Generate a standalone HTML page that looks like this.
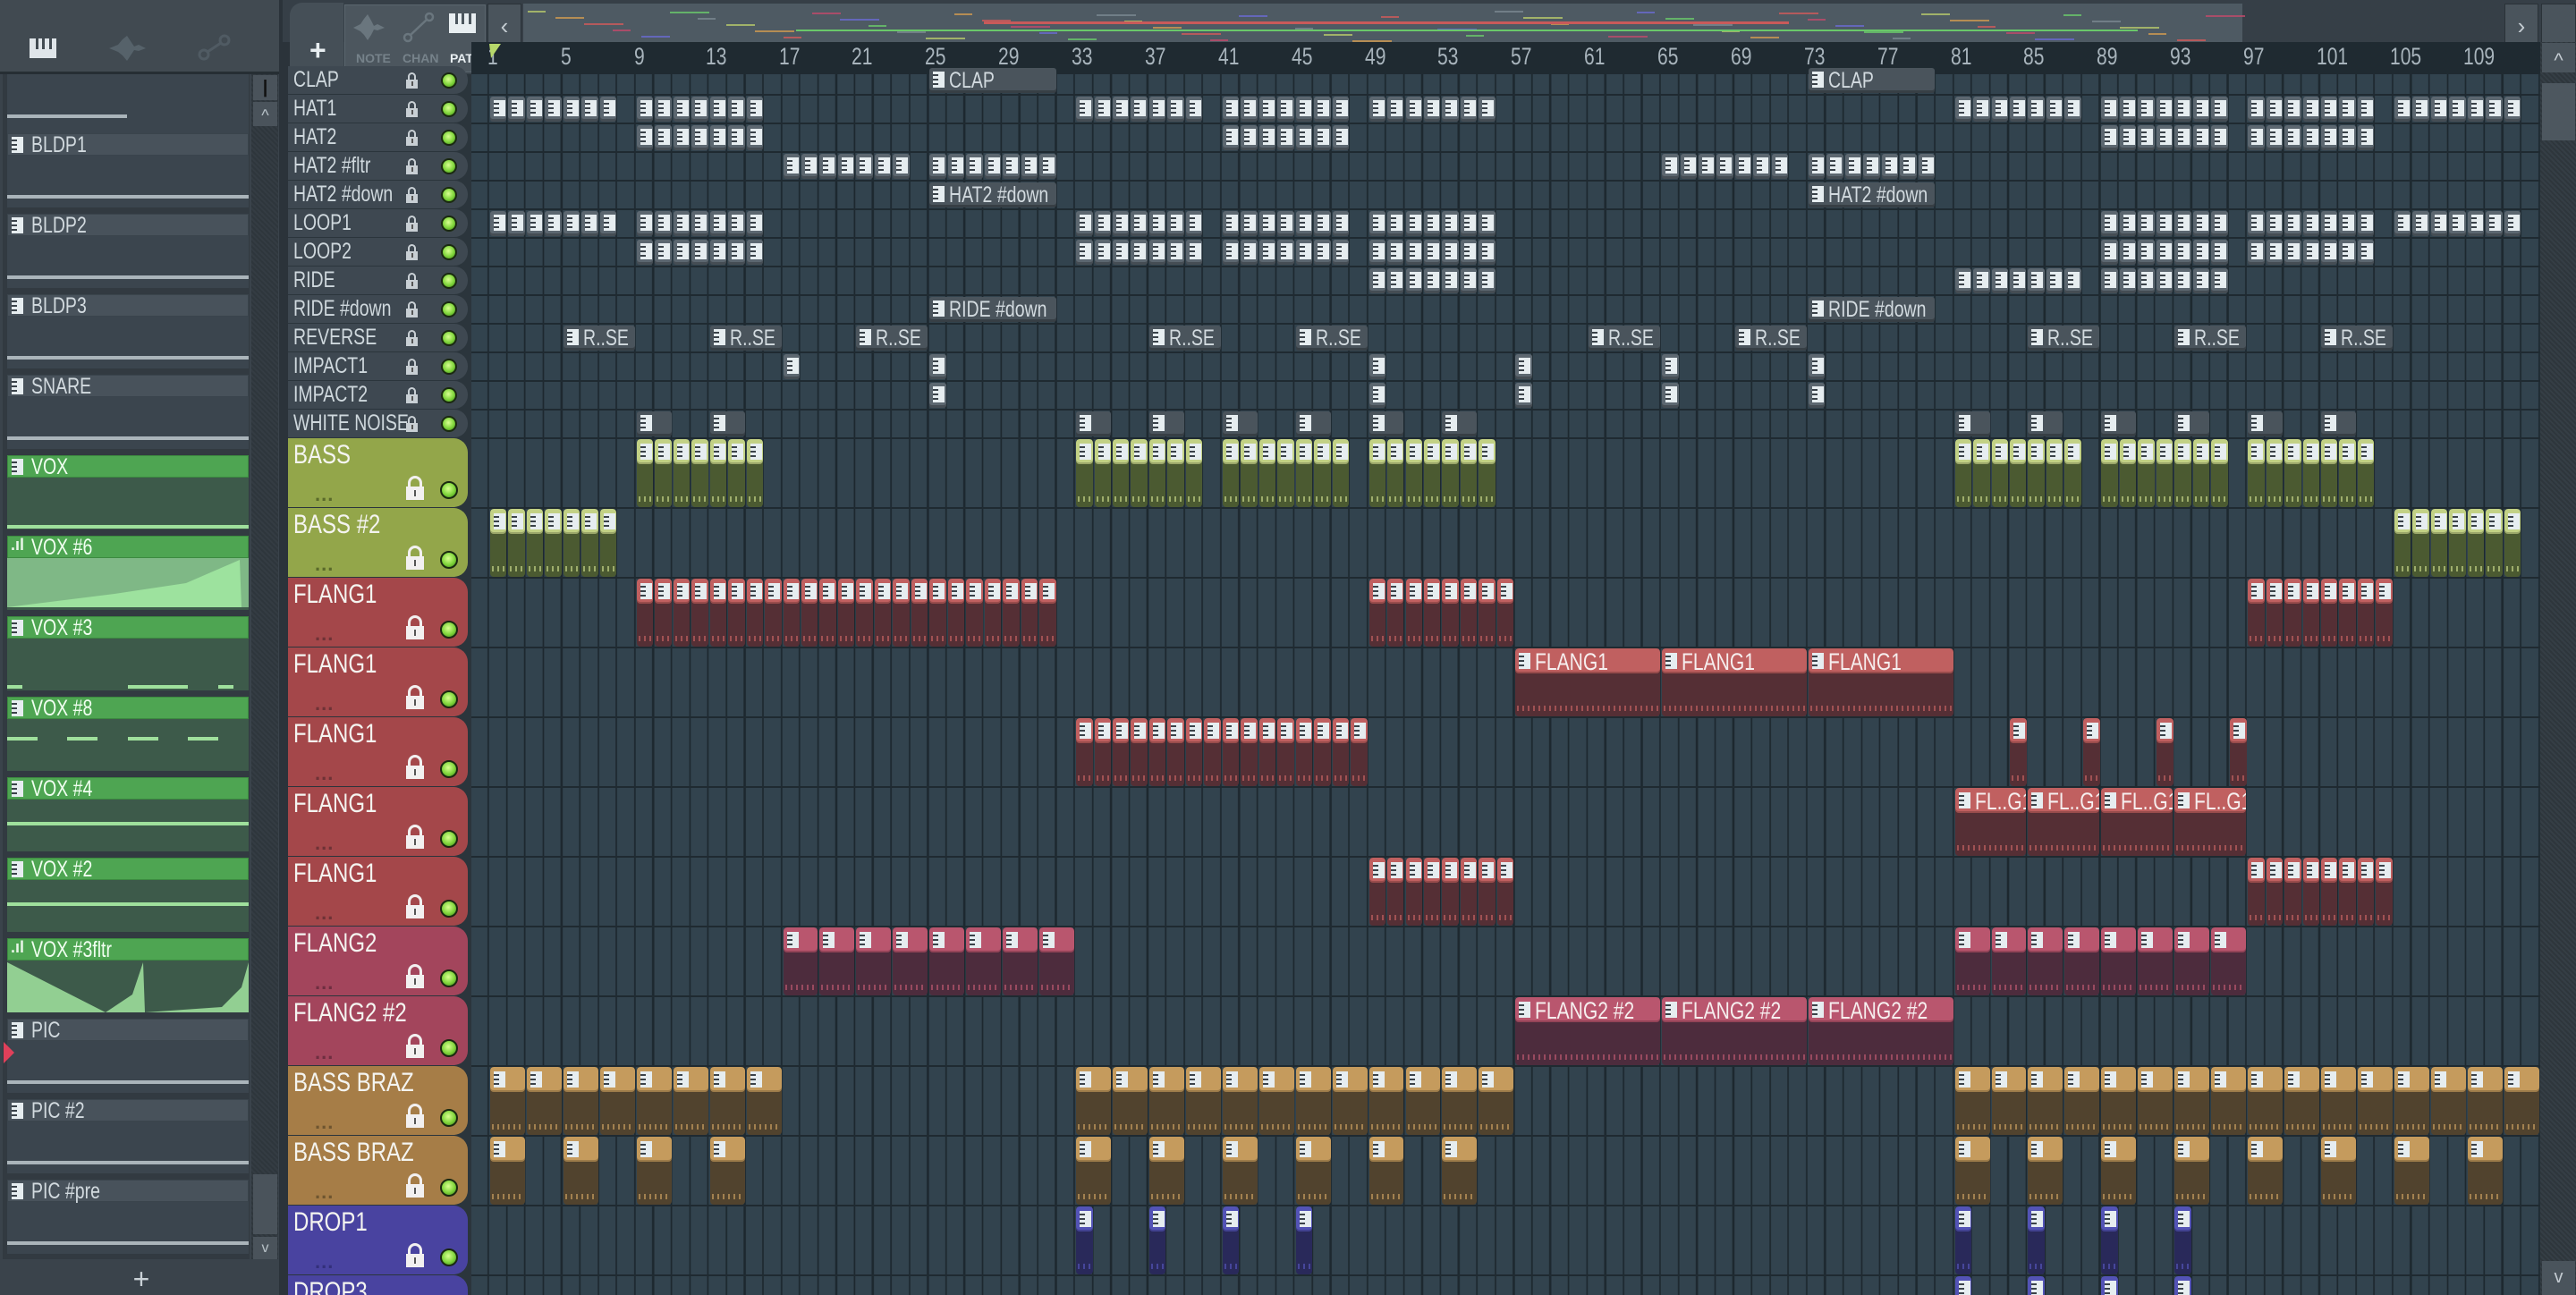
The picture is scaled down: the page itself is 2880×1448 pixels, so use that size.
<!DOCTYPE html>
<html><head><meta charset="utf-8">
<style>
*{box-sizing:border-box;margin:0;padding:0}
html,body{width:2880px;height:1448px;overflow:hidden}
body{background:#3a444c;font-family:"Liberation Sans Narrow","Liberation Sans",sans-serif;}
#wrap{position:relative;width:2880px;height:1448px;overflow:hidden}
.a{position:absolute}
.ic{position:absolute;width:13px;height:18px;background:linear-gradient(90deg,rgba(0,0,0,0) 0 45%,#e6edf0 45%),repeating-linear-gradient(180deg,#e6edf0 0 3px,#3a4249 3px 5px);}
.txt{position:absolute;white-space:nowrap;transform-origin:0 0}
</style></head><body><div id="wrap">
<div class="a" style="left:0;top:0;width:316px;height:83px;background:#414a51;border-bottom:3px solid #262e34"></div>
<svg class="a" style="left:0;top:0" width="316" height="83">
<rect x="33" y="43" width="30" height="22" fill="#dfe5e9"/>
<rect x="40" y="43" width="3" height="12" fill="#414a51"/><rect x="47" y="43" width="3" height="12" fill="#414a51"/><rect x="55" y="43" width="3" height="12" fill="#414a51"/>
<path d="M122 54 L132 50 L137 44 L142 40 L146 46 L150 52 L155 50 L163 54 L155 57 L150 56 L146 62 L142 68 L137 62 L132 58 Z" fill="#56626a"/>
<circle cx="228" cy="61" r="5" fill="none" stroke="#505b63" stroke-width="3"/><circle cx="251" cy="45" r="5" fill="none" stroke="#505b63" stroke-width="3"/><line x1="232" y1="58" x2="247" y2="48" stroke="#505b63" stroke-width="3"/>
</svg>
<div class="a" style="left:0;top:83px;width:316px;height:1365px;background:#3a434b"></div>
<div class="a" style="left:3px;top:83px;width:276px;height:1325px;background:#323a41"></div>
<div id="lp"></div>
<div class="a" style="left:281px;top:83px;width:30px;height:1325px;background:repeating-linear-gradient(45deg,#2e363c 0 2px,#343c43 2px 4px)"></div>
<div class="a" style="left:283px;top:84px;width:27px;height:28px;background:#4a535b;color:#111;font-size:20px;text-align:center;line-height:28px;font-weight:bold">|</div>
<div class="a" style="left:283px;top:114px;width:27px;height:27px;background:#4a535b;color:#b8c2c8;font-size:18px;text-align:center;line-height:30px">^</div>
<div class="a" style="left:283px;top:1313px;width:27px;height:67px;background:#4a535b"></div>
<div class="a" style="left:283px;top:1383px;width:27px;height:25px;background:#4a535b;color:#b8c2c8;font-size:16px;text-align:center;line-height:25px">v</div>
<div class="a" style="left:0;top:1410px;width:316px;height:38px;background:#3a434b;color:#c9d1d6;font-size:32px;text-align:center;line-height:40px">+</div>
<div class="a" style="left:312px;top:0;width:12px;height:1448px;background:#2b333a"></div>
<div class="a" style="left:316px;top:0;width:2564px;height:47px;background:#363f47"></div>
<div class="a" style="left:324px;top:3px;width:60px;height:80px;background:#454f57;border-radius:14px 0 0 0"></div>
<div class="txt" style="left:346px;top:38px;color:#e8eef1;font-size:32px;font-weight:bold">+</div>
<div class="a" style="left:385px;top:5px;width:158px;height:76px;background:#4c565e;border:1px solid #5b666e"></div>
<svg class="a" style="left:385px;top:5px" width="158" height="50">
<path d="M10 26 L18 22 L22 16 L26 11 L30 18 L33 24 L37 22 L45 26 L37 29 L33 28 L30 34 L26 40 L22 34 L18 30 Z" fill="#6a767e"/>
<circle cx="71" cy="37" r="4" fill="none" stroke="#6a767e" stroke-width="2.5"/><circle cx="95" cy="14" r="4" fill="none" stroke="#6a767e" stroke-width="2.5"/><line x1="74" y1="34" x2="92" y2="17" stroke="#6a767e" stroke-width="2.5"/>
<rect x="117" y="10" width="30" height="22" fill="#e8eef1"/><rect x="124" y="10" width="3" height="12" fill="#4c565e"/><rect x="131" y="10" width="3" height="12" fill="#4c565e"/><rect x="139" y="10" width="3" height="12" fill="#4c565e"/>
</svg>
<div class="txt" style="left:398px;top:57px;color:#76828a;font-size:14px;font-weight:bold">NOTE</div>
<div class="txt" style="left:450px;top:57px;color:#76828a;font-size:14px;font-weight:bold">CHAN</div>
<div class="txt" style="left:503px;top:57px;color:#e8eef1;font-size:14px;font-weight:bold">PAT</div>
<div class="a" style="left:545px;top:4px;width:38px;height:51px;background:#4a545c;border:1px solid #2a3238;color:#c4ccd2;font-size:26px;text-align:center;line-height:48px">‹</div>
<div class="a" style="left:585px;top:4px;width:1922px;height:51px;background:#4e5a63"></div>
<div id="ov"></div>
<div class="a" style="left:2800px;top:4px;width:38px;height:51px;background:#4a545c;border:1px solid #2a3238;color:#c4ccd2;font-size:26px;text-align:center;line-height:48px">›</div>
<div class="a" style="left:2841px;top:4px;width:39px;height:51px;background:#4a545c;border:1px solid #2a3238"></div>
<div class="a" style="left:527px;top:47px;width:2313px;height:36px;background:#1f2a31"></div>
<div id="rl"></div>
<svg class="a" style="left:545px;top:48px" width="16" height="18"><path d="M2 1 L15 1 L4 17 Z" fill="#b6d86a"/></svg>
<div class="a" style="left:322px;top:83px;width:205px;height:1365px;background:#2b353c"></div>
<div id="grid" class="a" style="left:527px;top:83px;width:2313px;height:1365px;background-color:#32434e;background-image:repeating-linear-gradient(90deg,#1d282f 0 2px,transparent 2px 20.47px);background-position:18px 0"></div>
<div id="rows"></div>
<div id="hd"></div>
<div id="cl"></div>
<div class="a" style="left:2840px;top:47px;width:40px;height:1401px;background:repeating-linear-gradient(45deg,#2e363c 0 2px,#353e45 2px 4px)"></div>
<div class="a" style="left:2842px;top:48px;width:37px;height:33px;background:#4a545c;color:#c4ccd2;font-size:22px;text-align:center;line-height:40px">^</div>
<div class="a" style="left:2842px;top:93px;width:37px;height:64px;background:#4d575f"></div>
<div class="a" style="left:2842px;top:1410px;width:37px;height:38px;background:#4a545c;color:#c4ccd2;font-size:20px;text-align:center;line-height:36px">v</div>
<div class="a" style="left:0;top:83px;width:2880px;height:1px"></div>
</div>
<script>
const BW=20.47,X=b=>547+(b-1)*BW;
function el(p,css,html){const d=document.createElement('div');d.className='a';d.style.cssText=css;if(html!==undefined)d.innerHTML=html;document.getElementById(p).appendChild(d);return d;}
for(let n=1;n<=109;n+=4){el('rl',`left:${X(n)-(n<10?2:4)}px;top:48px;color:#a8b4bc;font-size:27px;transform:scaleX(.78);transform-origin:0 0`,n);}
const ovc=['#b6c86a','#d09a50','#d05a5a','#c04a6a','#6a6ad0','#6ac86a','#7a8790'];
for(let i=0;i<60;i++){const x=590+Math.floor(i*31.8);const c=ovc[i%7];el('ov',`left:${x}px;top:${12+(i*7)%34}px;width:${20+(i%3)*12}px;height:2px;background:${c};opacity:.8`);}
el('ov','left:890px;top:33px;width:1500px;height:2px;background:#6ac86a');
el('ov','left:1100px;top:24px;width:900px;height:3px;background:#c85a5a');
const SR=74,SH=32,BR=490,BH=78;
for(let i=0;i<=13;i++)el('rows',`left:527px;top:${SR+i*SH-1}px;width:2313px;height:2px;background:#1f2a31`);
for(let j=0;j<=13;j++)el('rows',`left:527px;top:${BR+j*BH-1}px;width:2313px;height:2px;background:#1f2a31`);
const small=['CLAP','HAT1','HAT2','HAT2 #fltr','HAT2 #down','LOOP1','LOOP2','RIDE','RIDE #down','REVERSE','IMPACT1','IMPACT2','WHITE NOISE'];
const lock=(x,y,s,c)=>`<div class="a" style="top:${y}px;height:${s*0.7}px;border:${Math.max(2,s/6)}px solid ${c};border-bottom:none;border-radius:${s}px ${s}px 0 0;left:${x+s*0.12}px;width:${s*0.76}px"></div><div class="a" style="left:${x}px;top:${y+s*0.6}px;width:${s}px;height:${s*0.75}px;background:${c}"></div><div class="a" style="left:${x+s/2-1}px;top:${y+s*0.8}px;width:2px;height:${s*0.35}px;background:#555"></div>`;
const led=(cx,cy,r)=>`<div class="a" style="left:${cx-r}px;top:${cy-r}px;width:${2*r}px;height:${2*r}px;border-radius:50%;background:radial-gradient(circle at 45% 40%,#d8ff90,#7ed43a 55%,#3a7a18);border:2px solid #1a2a10"></div>`;
small.forEach((n,i)=>{const t=SR+i*SH;el('hd',`left:322px;top:${t}px;width:201px;height:31px;background:#3e4851;border-radius:0 15px 15px 0`,`<div class="txt" style="left:6px;top:1px;color:#cfd8dd;font-size:25px;transform:scaleX(.78)">${n}</div>${lock(132,7,13,'#c8cfd4')}${led(180,16,9)}`);});
const TH={g:['#93a64a','#c2d185','#4b5a31','#5a6a2a'],r:['#a4474a','#c06060','#552f35','#6e3236'],p:['#a3455c','#b9566e','#4d2c3d','#6e2e40'],b:['#a67d47','#c59b5d','#51432e','#6e5530'],u:['#4943a0','#5353b6','#29295a','#33307a']};
const big=[['BASS','g'],['BASS #2','g'],['FLANG1','r'],['FLANG1','r'],['FLANG1','r'],['FLANG1','r'],['FLANG1','r'],['FLANG2','p'],['FLANG2 #2','p'],['BASS BRAZ','b'],['BASS BRAZ','b'],['DROP1','u'],['DROP3','u']];
big.forEach((b,j)=>{const t=BR+j*BH,c=TH[b[1]];el('hd',`left:322px;top:${t}px;width:201px;height:77px;background:${c[0]};border-radius:0 16px 16px 0`,`<div class="txt" style="left:6px;top:2px;color:#f4f4f0;font-size:30px;transform:scaleX(.8)">${b[0]}</div><div class="txt" style="left:30px;top:50px;color:${c[3]};font-size:22px;font-weight:bold;letter-spacing:1px">...</div>${lock(132,42,20,'#f2f0f0')}${led(180,58,10)}`);});
const ic=(x,y,s)=>`<div class="ic" style="left:${x}px;top:${y}px;${s||''}"></div>`;
function sclip(row,b,len,label,light){const t=SR+row*SH;const x=X(b)+1,w=len*BW-2;
 el('cl',`left:${x}px;top:${t+2}px;width:${w}px;height:28px;background:${light?'#5c6770':'#4a545c'};border-radius:3px;box-shadow:inset 0 -3px 0 rgba(0,0,0,.25)`,ic(4,4)+(label?`<div class="txt" style="left:22px;top:0px;color:#d2dadf;font-size:25px;transform:scaleX(.78)">${label}</div>`:''));}
function sreps(row,starts,n,len){starts.forEach(s=>{for(let k=0;k<n;k++)sclip(row,s+k*len,len,null,true);});}
sreps(1,[1,9,33,41,49,81,89,97,105],7,1);
sreps(2,[9,41,89,97],7,1);
sreps(3,[17,25,65,73],7,1);
[25,73].forEach(s=>{sclip(0,s,7,'CLAP');sclip(4,s,7,'HAT2 #down');sclip(8,s,7,'RIDE #down');});
sreps(5,[1,9,33,41,49,89,97,105],7,1);
sreps(6,[9,33,41,49,89,97],7,1);
sreps(7,[49,81,89],7,1);
[5,13,21,37,45,61,69,85,93,101].forEach(s=>sclip(9,s,4,'R..SE'));
[17,25,49,57,65,73].forEach(s=>sclip(10,s,1,null,true));
[25,49,57,65,73].forEach(s=>sclip(11,s,1,null,true));
[9,13,33,37,41,45,49,53,81,85,89,93,97,101].forEach(s=>sclip(12,s,2,null));
function bclip(row,b,len,th,label,wpx){const t=BR+row*BH,c=TH[th];const x=X(b)+1,w=wpx||len*BW-2;
 el('cl',`left:${x}px;top:${t+1}px;width:${w}px;height:76px;background:${c[2]};border-radius:4px;overflow:hidden`,`<div class="a" style="left:0;top:0;width:${w}px;height:28px;background:${c[1]};border-radius:4px;box-shadow:inset 0 -2px 0 rgba(0,0,0,.2)"></div>`+ic(w<16?2:4,5)+(label?`<div class="txt" style="left:22px;top:0px;color:#f6eeee;font-size:27px;transform:scaleX(.78)">${label}</div>`:'')+`<div class="a" style="left:2px;top:64px;width:${w-4}px;height:6px;background:repeating-linear-gradient(90deg,${c[1]} 0 2px,transparent 2px 6px);opacity:.7"></div>`);}
function breps(row,starts,n,len,th){starts.forEach(s=>{for(let k=0;k<n;k++)bclip(row,s+k*len,len,th);});}
breps(0,[9,33,41,49,81,89,97],7,1,'g');
breps(1,[1,105],7,1,'g');
breps(2,[9],23,1,'r');breps(2,[49,97],8,1,'r');
[57,65,73].forEach(s=>bclip(3,s,8,'r','FLANG1'));
breps(4,[33],16,1,'r');[84,88,92,96].forEach(s=>bclip(4,s,1,'r',null,19));
[81,85,89,93].forEach(s=>bclip(5,s,4,'r','FL..G1'));
breps(6,[49,97],8,1,'r');
breps(7,[17,81],8,2,'p');
[57,65,73].forEach(s=>bclip(8,s,8,'p','FLANG2 #2'));
breps(9,[1],8,2,'b');breps(9,[33],12,2,'b');breps(9,[81],16,2,'b');
[1,5,9,13,33,37,41,45,49,53,81,85,89,93,97,101,105,109].forEach(s=>bclip(10,s,2,'b'));
[33,37,41,45,81,85,89,93].forEach(s=>bclip(11,s,1,'u'));
[81,85,89,93].forEach(s=>bclip(12,s,1,'u'));
const lp=[['',0],['BLDP1',0],['BLDP2',0],['BLDP3',0],['SNARE',0],['VOX',1],['VOX #6',2],['VOX #3',3],['VOX #8',4],['VOX #4',5],['VOX #2',5],['VOX #3fltr',6],['PIC',0],['PIC #2',0],['PIC #pre',0]];
lp.forEach((it,i)=>{const t=59+i*90;const g=it[1]>0;
 if(i===0){el('lp',`left:8px;top:83px;width:270px;height:66px;background:#3b454e`);el('lp',`left:8px;top:128px;width:134px;height:4px;background:#aab4ba`);return;}
 el('lp',`left:8px;top:${t+25}px;width:270px;height:58px;background:${g?'#3d5a4a':'#3b454e'}`);
 el('lp',`left:8px;top:${t}px;width:270px;height:25px;background:${g?'#4ea552':'#48525b'};border:1px solid ${g?'#3c8a40':'#3a444c'}`,`${it[1]==2||it[1]==6?'<div class="txt" style="left:3px;top:-1px;color:#e8f5e8;font-size:18px;font-weight:bold">.ıl</div>':ic(4,3)}<div class="txt" style="left:26px;top:-2px;color:${g?'#f0fff0':'#d2dadf'};font-size:25px;transform:scaleX(.78)">${it[0]}</div>`);
 const lc='#9fe09c';
 if(!g)el('lp',`left:8px;top:${t+69}px;width:270px;height:4px;background:#aab4ba`);
 if(it[1]==1)el('lp',`left:8px;top:${t+78}px;width:270px;height:4px;background:${lc}`);
 if(it[1]==2)el('lp',`left:8px;top:${t+25}px;width:270px;height:55px`,`<svg width="270" height="55"><rect width="270" height="55" fill="#7fb886"/><path d="M0 55 L40 50 L120 40 L200 28 L260 2 L262 55 Z" fill="#9de29e"/></svg>`);
 if(it[1]==3){[[0,17],[135,67],[236,17]].forEach(a=>el('lp',`left:${8+a[0]}px;top:${t+77}px;width:${a[1]}px;height:4px;background:${lc}`));}
 if(it[1]==4){[0,67,135,202].forEach(a=>el('lp',`left:${8+a}px;top:${t+45}px;width:34px;height:4px;background:${lc}`));}
 if(it[1]==5)el('lp',`left:8px;top:${t+50}px;width:270px;height:4px;background:${lc}`);
 if(it[1]==6)el('lp',`left:8px;top:${t+25}px;width:270px;height:58px`,`<svg width="270" height="58"><path d="M0 2 L110 58 L140 38 L152 2 L154 58 L240 52 L262 30 L270 2 L270 58 L0 58 Z" fill="#92cf92"/></svg>`);
});
el('lp','left:4px;top:1165px;width:0;height:0;border-top:12px solid transparent;border-bottom:12px solid transparent;border-left:12px solid #e0405a');
</script>
</body></html>
